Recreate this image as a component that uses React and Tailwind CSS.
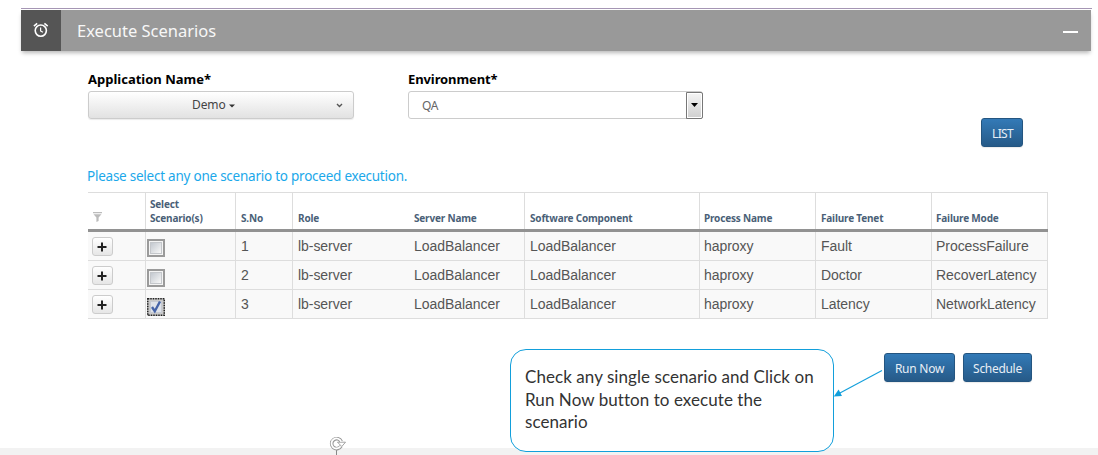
import React from "react";

const COLS = "grid grid-cols-[58px_90px_57px_116px_116px_175px_116px_116px_116px]";

const HEADERS = [
  ["S.No", "border-r pl-[5px]"],
  ["Role", "pl-[5px]"],
  ["Server Name", "border-r pl-[5px]"],
  ["Software Component", "border-r pl-[5px]"],
  ["Process Name", "border-r pl-[4px]"],
  ["Failure Tenet", "border-r pl-[5px]"],
  ["Failure Mode", "border-r pl-[4px]"],
];

const ROWS = [
  { cells: ["1", "lb-server", "LoadBalancer", "LoadBalancer", "haproxy", "Fault", "ProcessFailure"], checked: false },
  { cells: ["2", "lb-server", "LoadBalancer", "LoadBalancer", "haproxy", "Doctor", "RecoverLatency"], checked: false },
  { cells: ["3", "lb-server", "LoadBalancer", "LoadBalancer", "haproxy", "Latency", "NetworkLatency"], checked: true },
];

function AlarmIcon() {
  return (
    <svg width="16" height="16" viewBox="0 0 16 16" fill="none" stroke="#fff">
      <circle cx="7.8" cy="8.6" r="5.6" strokeWidth="1.6" />
      <path d="M7.6 5.4v3.5l2.3 1.4" strokeWidth="1.2" />
      <path d="M0.9 4.2 4.2 1.4M14.7 4.2 11.4 1.4" strokeWidth="1.6" />
    </svg>
  );
}

function Check({ checked }) {
  if (checked) {
    return (
      <svg width="18" height="18" viewBox="0 0 18 18" className="block">
        <rect width="18" height="18" fill="#c9c9c9" />
        <rect x="0.75" y="0.75" width="16.5" height="16.5" fill="none" stroke="#222" strokeWidth="1.5" strokeDasharray="1.5 1" />
        <rect x="3.5" y="3.5" width="11" height="11" fill="#dfe3ea" stroke="#c6cad2" />
        <path d="M5 9 7.8 13.2 13 3.5" fill="none" stroke="#4664a8" strokeWidth="2.4" />
      </svg>
    );
  }
  return (
    <span className="block h-[18px] w-[18px] border-2 border-[#9a9a9a] bg-[#f4f4f4] p-px">
      <span className="block h-full w-full border border-[#c4c7cb] bg-linear-to-br from-[#c3c8cf] to-[#f8f8f8]" />
    </span>
  );
}

function BlueButton({ children, className }) {
  return (
    <button
      className={
        "flex h-[29px] items-center justify-center rounded-[3px] border border-[#245580] bg-linear-to-b from-[#337ab7] to-[#265a88] pt-[2px] text-[12px] text-[#e8eff6] shadow-[0_1px_1px_rgba(0,0,0,0.08)] " +
        className
      }
    >
      {children}
    </button>
  );
}

export default function App() {
  return (
    <div className="relative flex h-[455px] w-[1098px] flex-col overflow-hidden bg-white font-['Noto_Sans',sans-serif] text-black">
      <header className="mt-2 ml-[21px] w-[1071px] border-t border-[#a596b4] pt-px">
        <div className="flex h-[41px] w-[1070px] items-center bg-[#999] shadow-[0_3px_4px_-1px_rgba(0,0,0,0.28)]">
          <div className="flex h-full w-10 items-center justify-center bg-[#555] pb-[2px]">
            <AlarmIcon />
          </div>
          <h1 className="ml-4 pt-px text-[16.5px] whitespace-nowrap text-[#f7f7f7]">Execute Scenarios</h1>
          <div className="mt-[2px] mr-[13px] ml-auto h-[2px] w-[15px] bg-white" />
        </div>
      </header>

      <section className="mt-[19px] flex h-[48px] pl-[88px]">
        <div className="w-[320px]">
          <label className="block h-[21px] text-[13px] leading-[19px] font-bold">Application Name*</label>
          <div className="flex h-[28px] w-[266px] items-center rounded-[3px] border border-[#ccc] bg-linear-to-b from-white to-[#e2e2e2] text-[12px] tracking-[-0.1px] text-[#444] shadow-[0_1px_1px_rgba(0,0,0,0.08)]">
            <span className="ml-[103px]">Demo</span>
            <svg className="mt-[2px] ml-[3px]" width="6" height="4" viewBox="0 0 6 4"><path d="M0 0.5h6L3 3.5z" fill="#333" /></svg>
            <svg className="mr-[10px] ml-auto" width="7" height="5" viewBox="0 0 7 5"><path d="M1 1l2.5 2.5L6 1" fill="none" stroke="#555" strokeWidth="1.4" /></svg>
          </div>
        </div>
        <div>
          <label className="block h-[21px] text-[13px] leading-[19px] font-bold tracking-[-0.1px]">Environment*</label>
          <div className="flex h-[28px] w-[295px] items-center rounded-[3px] border border-[#ccc] text-[12px] text-[#666]">
            <span className="ml-[13px] pt-[2px] tracking-[-0.4px]">QA</span>
            <div className="-mr-px ml-auto flex h-[27px] w-[17px] items-center justify-center rounded-r-[2px] border border-[#777] bg-linear-to-b from-[#f5f5f5] to-[#cfcfcf] shadow-[inset_0_0_0_1px_#fff]">
              <svg width="7" height="4" viewBox="0 0 7 4"><path d="M0 0h7L3.5 4z" fill="#000" /></svg>
            </div>
          </div>
        </div>
      </section>

      <div className="flex h-[29px] pl-[981px]">
        <BlueButton className="w-[42px] pl-px tracking-[-0.7px]">LIST</BlueButton>
      </div>

      <p className="mt-[19px] ml-[87px] h-[26px] text-[13.5px] leading-[20px] tracking-[-0.24px] whitespace-nowrap text-[#1ba8ea]">
        Please select any one scenario to proceed execution.
      </p>

      <div className="ml-[88px] w-[960px]">
        <div className={COLS + " h-[40px] border-t border-b-[3px] border-t-[#ddd] border-b-[#929292] text-[10px] leading-[14px] font-bold tracking-[-0.18px] text-[#4a5f77]"}>
          <div className="flex items-end border-r border-[#ddd] pb-[7px] pl-[5px]">
            <svg width="9" height="10" viewBox="0 0 9 10"><path d="M0 0h9v1.3H0zM0.5 2.3h8L5.6 5.5V9L3.4 10V5.5z" fill="#bbb" /></svg>
          </div>
          <div className="flex items-end border-r border-[#ddd] pb-[4px] pl-[4px]">
            <span>Select<br />Scenario(s)</span>
          </div>
          {HEADERS.map(([h, c]) => (
            <div key={h} className={"flex items-end border-[#ddd] pb-[4px] whitespace-nowrap " + c}>{h}</div>
          ))}
        </div>
        {ROWS.map((row, r) => (
          <div key={row.cells[0]} className={COLS + " h-[29px] border-b border-[#ddd] bg-[#f9f9f9] font-['Liberation_Sans',sans-serif] text-[14px] tracking-[-0.05px] text-[#555]"}>
            <div className="border-r border-[#ddd] pt-[5px] pl-[4px]">
              <button className="flex h-[19px] w-[21px] items-center justify-center rounded-[3px] border border-[#ccc] bg-linear-to-b from-white to-[#e6e6e6] pr-px">
                <svg width="10" height="10" viewBox="0 0 10 10"><path d="M5 0.5v9M0.5 5h9" stroke="#222" strokeWidth="2" /></svg>
              </button>
            </div>
            <div className={"border-r border-[#ddd] pl-px " + (r === 0 ? "pt-[7px]" : "pt-[8px]")}>
              <Check checked={row.checked} />
            </div>
            {row.cells.map((cell, i) => (
              <div key={i} className={"border-[#ddd] pt-[4px] leading-[21px] whitespace-nowrap " + HEADERS[i][1]}>{cell}</div>
            ))}
          </div>
        ))}
      </div>

      <div className="mt-[34px] flex gap-2 pl-[884px]">
        <BlueButton className="w-[71px] tracking-[-0.25px]">Run Now</BlueButton>
        <BlueButton className="w-[69px] tracking-[-0.3px]">Schedule</BlueButton>
      </div>

      <footer className="mt-auto h-[7px] shrink-0 bg-[#f2f2f2]" />

      <aside className="absolute top-[349px] left-[510px] h-[103px] w-[324px] rounded-[16px] border border-[#129fdb] bg-white pt-[16px] pl-[14px] font-['Lato',sans-serif] text-[17px] leading-[22.5px] tracking-[0.06px] whitespace-nowrap text-[#333]">
        Check any single scenario and Click on<br />Run Now button to execute the<br />scenario
      </aside>
      <svg className="absolute top-[365px] left-[832px]" width="54" height="34" viewBox="0 0 54 34">
        <path d="M50 5.5 7 28.5" stroke="#129fdb" strokeWidth="1.1" />
        <path d="M1.8 31.5 6.6 24.5 10 31z" fill="#129fdb" />
      </svg>
      <svg className="absolute top-[435px] left-[328px]" width="20" height="20" viewBox="0 0 20 20" fill="none">
        <path d="M8.5 14v6" stroke="#888" strokeWidth="1" />
        <path d="M13 11.2A5 5 0 1 1 13.2 6.6" stroke="#999" strokeWidth="3.6" />
        <path d="M9.5 7.2h8L13.8 11.5z" fill="#fff" stroke="#999" strokeWidth="0.9" />
        <path d="M12.7 11.2A5 5 0 1 1 13.2 6.8" stroke="#fff" strokeWidth="1.8" />
      </svg>
    </div>
  );
}
